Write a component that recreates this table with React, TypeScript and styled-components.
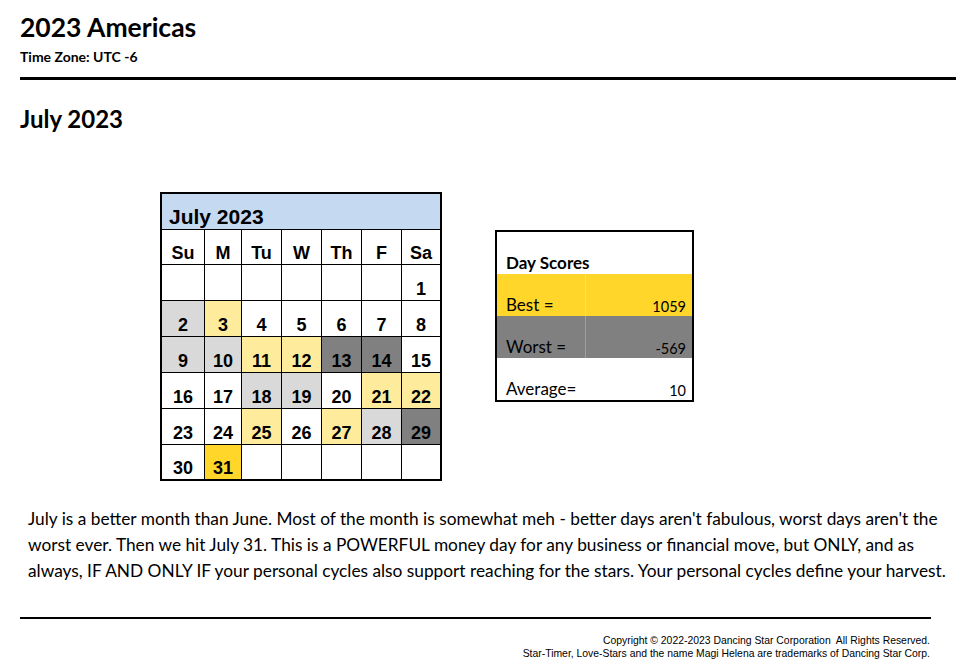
import React from 'react';
import styled, { createGlobalStyle } from 'styled-components';

const colors = {
  black: '#000000',
  white: '#ffffff',
  headerBlue: '#c5d9f1',
  lightGrey: '#d9d9d9',
  darkGrey: '#808080',
  paleYellow: '#ffeb9c',
  gold: '#ffd629',
};

const calibri = `Lato, "Noto Sans", sans-serif`;
const arial = `"Liberation Sans", Arial, sans-serif`;

const GlobalStyle = createGlobalStyle`
  body {
    margin: 0;
    background: ${colors.white};
    color: ${colors.black};
    font-family: ${calibri};
  }
`;

const Page = styled.div`
  width: 967px;
  padding: 12px 11px 0 20px;
  box-sizing: border-box;
`;

const Title = styled.h1`
  margin: 0;
  font-size: 26.5px;
  font-weight: 700;
  line-height: 30px;
`;

const TimeZone = styled.div`
  margin-top: 7px;
  font-size: 14px;
  font-weight: 700;
  line-height: 16px;
`;

const Rule = styled.hr<{ $width: number; $thick: number }>`
  margin: 0;
  border: 0;
  width: ${(p) => p.$width}px;
  height: ${(p) => p.$thick}px;
  background: ${colors.black};
`;

const TopRule = styled(Rule)`
  margin-top: 12px;
`;

const MonthTitle = styled.h2`
  margin: 25px 0 0;
  font-size: 24px;
  font-weight: 700;
  line-height: 28px;
`;

const Charts = styled.div`
  display: flex;
  align-items: flex-start;
  gap: 53px;
  margin: 59px 0 0 140px;
`;

const Calendar = styled.div`
  border: 2px solid ${colors.black};
  background: ${colors.black};
  display: grid;
  grid-template-columns: 42px 36px 39px 39px 39px 39px 38px;
  grid-template-rows: 35px 34px 35px 35px 35px 35px 35px 34px;
  gap: 1px;
  font-family: ${arial};
  font-weight: 700;
`;

const CalHeader = styled.div`
  grid-column: 1 / -1;
  background: ${colors.headerBlue};
  font-size: 21px;
  line-height: 24px;
  padding: 0 0 0 7px;
  display: flex;
  align-items: flex-end;
`;

const DayName = styled.div`
  background: ${colors.white};
  font-size: 18px;
  line-height: 21px;
  display: flex;
  align-items: flex-end;
  justify-content: center;
`;

type Shade = 'none' | 'light' | 'dark' | 'pale' | 'gold';

const shadeColor: Record<Shade, string> = {
  none: colors.white,
  light: colors.lightGrey,
  dark: colors.darkGrey,
  pale: colors.paleYellow,
  gold: colors.gold,
};

const DayCell = styled.div<{ $shade: Shade }>`
  background: ${(p) => shadeColor[p.$shade]};
  font-size: 18px;
  line-height: 21px;
  display: flex;
  align-items: flex-end;
  justify-content: center;
`;

const Scores = styled.div`
  margin-top: 38px;
  width: 195px;
  border: 2px solid ${colors.black};
  font-size: 17px;
`;

const ScoreRow = styled.div<{ $bg: string }>`
  display: grid;
  grid-template-columns: 89px 1fr;
  height: 42px;
  background: ${(p) => p.$bg};
  align-items: end;
`;

const ScoreHead = styled.div`
  height: 41px;
  display: flex;
  align-items: flex-end;
  padding: 0 0 1px 9px;
  font-weight: 700;
`;

const ScoreLabel = styled.div`
  padding: 0 0 1px 9px;
  height: 100%;
  display: flex;
  align-items: flex-end;
  border-right: 1px solid rgba(255, 255, 255, 0.25);
  box-sizing: border-box;
`;

const ScoreValue = styled.div`
  text-align: right;
  padding: 0 6px 1px 0;
  font-size: 14.5px;
`;

const Blurb = styled.p`
  margin: 25px 0 0 8px;
  width: 932px;
  font-size: 17.3px;
  line-height: 26px;
`;

const BottomRule = styled(Rule)`
  margin-top: 33px;
`;

const Footer = styled.div`
  width: 910px;
  margin-top: 15px;
  text-align: right;
  font-family: ${arial};
  font-size: 10.4px;
  line-height: 13px;
`;

const weeks: [string, Shade][][] = [
  [['', 'none'], ['', 'none'], ['', 'none'], ['', 'none'], ['', 'none'], ['', 'none'], ['1', 'none']],
  [['2', 'light'], ['3', 'pale'], ['4', 'none'], ['5', 'none'], ['6', 'none'], ['7', 'none'], ['8', 'none']],
  [['9', 'light'], ['10', 'light'], ['11', 'pale'], ['12', 'pale'], ['13', 'dark'], ['14', 'dark'], ['15', 'none']],
  [['16', 'none'], ['17', 'none'], ['18', 'light'], ['19', 'light'], ['20', 'none'], ['21', 'pale'], ['22', 'pale']],
  [['23', 'none'], ['24', 'none'], ['25', 'pale'], ['26', 'none'], ['27', 'pale'], ['28', 'light'], ['29', 'dark']],
  [['30', 'none'], ['31', 'gold'], ['', 'none'], ['', 'none'], ['', 'none'], ['', 'none'], ['', 'none']],
];

const dayNames = ['Su', 'M', 'Tu', 'W', 'Th', 'F', 'Sa'];

const App: React.FC = () => {
  return (
    <Page>
      <GlobalStyle />
      <Title>2023 Americas</Title>
      <TimeZone>Time Zone: UTC -6</TimeZone>
      <TopRule $width={936} $thick={3} />
      <MonthTitle>July 2023</MonthTitle>

      <Charts>
        <Calendar>
          <CalHeader>July 2023</CalHeader>
          {dayNames.map((d) => (
            <DayName key={d}>{d}</DayName>
          ))}
          {weeks.flat().map(([n, shade], i) => (
            <DayCell key={i} $shade={shade}>
              {n}
            </DayCell>
          ))}
        </Calendar>

        <Scores>
          <ScoreHead>Day Scores</ScoreHead>
          <ScoreRow $bg={colors.gold}>
            <ScoreLabel>Best =</ScoreLabel>
            <ScoreValue>1059</ScoreValue>
          </ScoreRow>
          <ScoreRow $bg={colors.darkGrey}>
            <ScoreLabel>Worst =</ScoreLabel>
            <ScoreValue>-569</ScoreValue>
          </ScoreRow>
          <ScoreRow $bg={colors.white}>
            <ScoreLabel>Average=</ScoreLabel>
            <ScoreValue>10</ScoreValue>
          </ScoreRow>
        </Scores>
      </Charts>

      <Blurb>
        July is a better month than June. Most of the month is somewhat meh - better days aren't fabulous,
        worst days aren't the worst ever. Then we hit July 31. This is a POWERFUL money day for any business
        or financial move, but ONLY, and as always, IF AND ONLY IF your personal cycles also support reaching
        for the stars. Your personal cycles define your harvest.
      </Blurb>

      <BottomRule $width={911} $thick={2} />
      <Footer>
        Copyright © 2022-2023 Dancing Star Corporation&nbsp; All Rights Reserved.
        <br />
        Star-Timer, Love-Stars and the name Magi Helena are trademarks of Dancing Star Corp.
      </Footer>
    </Page>
  );
};

export default App;
